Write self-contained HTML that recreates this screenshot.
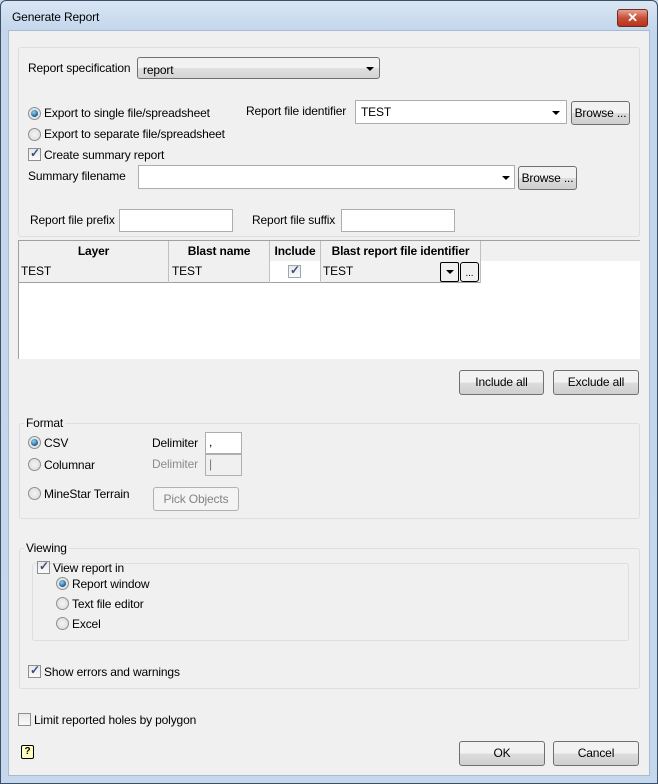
<!DOCTYPE html>
<html><head><style>
*{box-sizing:border-box;margin:0;padding:0}
body{width:658px;height:784px;position:relative;font-family:"Liberation Sans",sans-serif;font-size:12px;letter-spacing:-0.15px;color:#000;background:#c9dbee;overflow:hidden}
.a{position:absolute;white-space:nowrap}
.frame{position:absolute;left:0;top:0;width:658px;height:784px;border:1px solid #3c4f66;border-radius:6px 6px 0 0;background:linear-gradient(#d9e6f4,#c3d6ec 30px,#c4d7ec)}
.client{position:absolute;left:8px;top:30px;width:642px;height:746px;background:#f0f0f0;border:1px solid #a8bbd0}
.grp{position:absolute;border:1px solid #dadfe3;border-radius:3px}
.inp{position:absolute;background:#fff;border:1px solid #abadb3}
.btn{position:absolute;border:1px solid #707070;border-radius:3px;background:linear-gradient(#f2f2f2 50%,#dddddd 50%,#cfcfcf);text-align:center;line-height:22px}
.rad{position:absolute;width:13px;height:13px;border-radius:50%;border:1px solid #8e8f8f;background:radial-gradient(#f4f4f4,#d8d8d8)}
.rad.on::after{content:"";position:absolute;left:2px;top:2px;width:7px;height:7px;border-radius:50%;background:radial-gradient(circle at 40% 35%,#8bd8fb,#1a5a8f 70%)}
.chk{position:absolute;width:13px;height:13px;border:1px solid #8e8f8f;background:linear-gradient(#e8e8e8,#fafafa)}
.chk.on::after{content:"✓";position:absolute;left:1px;top:-3px;font-size:12px;font-weight:bold;color:#3b4e82}
.arr{position:absolute;width:0;height:0;border-left:4px solid transparent;border-right:4px solid transparent;border-top:4px solid #000}
</style></head><body>
<div class="frame"></div>
<div class="a" style="left:12px;top:10px">Generate Report</div>
<div class="a" style="left:617px;top:9px;width:31px;height:18px;border:1px solid #6d2a1e;border-radius:3px;background:linear-gradient(#e8a08f,#c7503a 50%,#b8321c);color:#fff;font-weight:bold;text-align:center;line-height:16px;font-size:13px">✕</div>
<div class="client"></div>

<div class="grp" style="left:18px;top:47px;width:622px;height:190px"></div>
<div class="a" style="left:28px;top:61px">Report specification</div>
<div class="a" style="left:137px;top:57px;width:243px;height:22px;border:1px solid #707070;border-radius:3px;background:linear-gradient(#f2f2f2 50%,#e0e0e0 50%,#d4d4d4);padding:5px 5px">report</div>
<div class="arr" style="left:366px;top:67px"></div>

<div class="rad on" style="left:28px;top:107px"></div>
<div class="a" style="left:44px;top:106px">Export to single file/spreadsheet</div>
<div class="a" style="left:246px;top:104px">Report file identifier</div>
<div class="inp" style="left:355px;top:100px;width:212px;height:24px;padding:4px 5px">TEST</div>
<div class="arr" style="left:552px;top:111px"></div>
<div class="btn" style="left:571px;top:101px;width:59px;height:24px">Browse ...</div>

<div class="rad" style="left:28px;top:128px"></div>
<div class="a" style="left:44px;top:127px">Export to separate file/spreadsheet</div>
<div class="chk on" style="left:28px;top:148px"></div>
<div class="a" style="left:44px;top:148px">Create summary report</div>
<div class="a" style="left:28px;top:169px">Summary filename</div>
<div class="inp" style="left:138px;top:165px;width:377px;height:24px"></div>
<div class="arr" style="left:502px;top:176px"></div>
<div class="btn" style="left:518px;top:166px;width:59px;height:24px">Browse ...</div>

<div class="a" style="left:30px;top:213px">Report file prefix</div>
<div class="inp" style="left:119px;top:209px;width:114px;height:23px"></div>
<div class="a" style="left:252px;top:213px">Report file suffix</div>
<div class="inp" style="left:341px;top:209px;width:114px;height:23px"></div>

<div class="a" style="left:18px;top:240px;width:622px;height:119px;background:#fff;border:1px solid #a0a0a0;border-right:none;border-bottom:none"></div>
<div class="a" style="left:19px;top:241px;width:621px;height:20px;background:#f0f0f0"></div>
<div class="a" style="left:19px;top:261px;width:461px;height:22px;background:#f0f0f0;border-bottom:1px solid #a0a0a0"></div>
<div class="a" style="left:269px;top:261px;width:51px;height:22px;background:#fff;border-bottom:1px solid #a0a0a0"></div>
<div class="a" style="left:168px;top:241px;width:1px;height:42px;background:#c0c0c0"></div>
<div class="a" style="left:269px;top:241px;width:1px;height:42px;background:#c0c0c0"></div>
<div class="a" style="left:320px;top:241px;width:1px;height:42px;background:#c0c0c0"></div>
<div class="a" style="left:480px;top:241px;width:1px;height:42px;background:#c0c0c0"></div>
<div class="a" style="left:19px;top:244px;width:149px;text-align:center;font-weight:bold">Layer</div>
<div class="a" style="left:169px;top:244px;width:100px;text-align:center;font-weight:bold">Blast name</div>
<div class="a" style="left:270px;top:244px;width:50px;text-align:center;font-weight:bold">Include</div>
<div class="a" style="left:321px;top:244px;width:159px;text-align:center;font-weight:bold">Blast report file identifier</div>
<div class="a" style="left:21px;top:264px">TEST</div>
<div class="a" style="left:172px;top:264px">TEST</div>
<div class="chk on" style="left:288px;top:265px;border-color:#9aa;"></div>
<div class="a" style="left:323px;top:264px">TEST</div>
<div class="a" style="left:440px;top:262px;width:19px;height:20px;border:1px solid #000;border-radius:2px;background:#f0f0f0"></div>
<div class="arr" style="left:446px;top:270px"></div>
<div class="a" style="left:460px;top:262px;width:19px;height:20px;border:1px solid #000;border-radius:3px;background:#f0f0f0;text-align:center;font-size:10px;line-height:22px">...</div>

<div class="btn" style="left:459px;top:370px;width:85px;height:25px">Include all</div>
<div class="btn" style="left:553px;top:370px;width:86px;height:25px">Exclude all</div>

<div class="grp" style="left:19px;top:423px;width:621px;height:96px"></div>
<div class="a" style="left:24px;top:416px;background:#f0f0f0;padding:0 2px">Format</div>
<div class="rad on" style="left:28px;top:436px"></div>
<div class="a" style="left:44px;top:436px">CSV</div>
<div class="a" style="left:152px;top:436px">Delimiter</div>
<div class="inp" style="left:205px;top:432px;width:37px;height:22px;padding:2px 3px">,</div>
<div class="rad" style="left:28px;top:458px"></div>
<div class="a" style="left:44px;top:458px">Columnar</div>
<div class="a" style="left:152px;top:457px;color:#8d8d8d">Delimiter</div>
<div class="inp" style="left:205px;top:454px;width:37px;height:22px;background:#f0f0f0;border-color:#b0b0b0;padding:2px 3px;color:#777">|</div>
<div class="rad" style="left:28px;top:487px"></div>
<div class="a" style="left:44px;top:487px">MineStar Terrain</div>
<div class="a" style="left:153px;top:487px;width:86px;height:24px;border:1px solid #adb2b5;border-radius:3px;background:#f4f4f4;color:#838383;text-align:center;line-height:22px">Pick Objects</div>

<div class="grp" style="left:19px;top:548px;width:621px;height:141px"></div>
<div class="a" style="left:24px;top:541px;background:#f0f0f0;padding:0 2px">Viewing</div>
<div class="grp" style="left:32px;top:563px;width:597px;height:78px"></div>
<div class="chk on" style="left:37px;top:561px"></div>
<div class="a" style="left:53px;top:561px">View report in</div>
<div class="rad on" style="left:56px;top:577px"></div>
<div class="a" style="left:72px;top:577px">Report window</div>
<div class="rad" style="left:56px;top:597px"></div>
<div class="a" style="left:72px;top:597px">Text file editor</div>
<div class="rad" style="left:56px;top:617px"></div>
<div class="a" style="left:72px;top:617px">Excel</div>
<div class="chk on" style="left:28px;top:665px"></div>
<div class="a" style="left:44px;top:665px">Show errors and warnings</div>

<div class="chk" style="left:18px;top:713px"></div>
<div class="a" style="left:34px;top:713px">Limit reported holes by polygon</div>
<div class="a" style="left:21px;top:745px;width:13px;height:14px;border:1px solid #000;border-radius:2px;background:#ffffc0;font-size:10px;font-weight:bold;text-align:center;line-height:12px">?</div>
<div class="btn" style="left:459px;top:741px;width:86px;height:25px">OK</div>
<div class="btn" style="left:553px;top:741px;width:86px;height:25px">Cancel</div>
</body></html>
